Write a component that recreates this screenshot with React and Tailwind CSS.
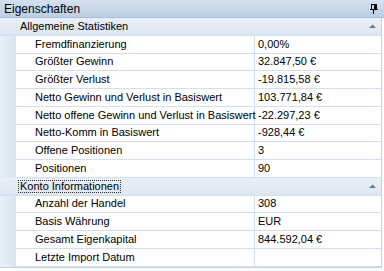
import { Fragment } from "react";

const sections = [
  {
    title: "Allgemeine Statistiken",
    rows: [
      ["Fremdfinanzierung", "0,00%"],
      ["Größter Gewinn", "32.847,50 €"],
      ["Größter Verlust", "-19.815,58 €"],
      ["Netto Gewinn und Verlust in Basiswert", "103.771,84 €"],
      ["Netto offene Gewinn und Verlust in Basiswert", "-22.297,23 €"],
      ["Netto-Komm in Basiswert", "-928,44 €"],
      ["Offene Positionen", "3"],
      ["Positionen", "90"],
    ],
  },
  {
    title: "Konto Informationen",
    focused: true,
    rows: [
      ["Anzahl der Handel", "308"],
      ["Basis Währung", "EUR"],
      ["Gesamt Eigenkapital", "844.592,04 €"],
      ["Letzte Import Datum", ""],
    ],
  },
];

function Pin() {
  return (
    <svg width="8" height="10" viewBox="0 0 8 10" className="block">
      <rect x="1.5" y="0.5" width="5" height="5" fill="none" stroke="#000" />
      <rect x="4" y="1" width="2" height="4" fill="#000" />
      <rect x="0" y="5" width="8" height="1" fill="#000" />
      <rect x="3" y="6" width="1" height="4" fill="#000" />
    </svg>
  );
}

function Caret() {
  return (
    <svg width="7" height="4" viewBox="0 0 7 4" className="block">
      <path d="M0 4 L3.5 0.5 L7 4 Z" fill="#6b7b8d" />
    </svg>
  );
}

export default function App() {
  return (
    <div
      className="w-[384px] h-[271px] bg-white overflow-hidden text-black text-[11px] leading-none"
      style={{ fontFamily: '"Liberation Sans", Arial, sans-serif' }}
    >
      <div className="h-[18px] flex items-center justify-between pl-[4px] pr-[6px] bg-gradient-to-b from-[#d3e0ef] to-[#bccfe5] border-b border-[#a7bcd6] text-[12px]">
        <span>Eigenschaften</span>
        <Pin />
      </div>
      <div className="mr-[2px] border-r border-b border-[#c5d3e3]">
        {sections.map((s) => (
          <Fragment key={s.title}>
            <div className="h-[17.75px] flex items-center bg-gradient-to-b from-[#eaf0f8] to-[#dde7f3] border-b border-[#d3dfec]">
              <div className="w-[16px] self-stretch" />
              <span
                className={
                  "ml-[3px] px-[1px] " +
                  (s.focused ? "outline-1 outline-dotted outline-[#333]" : "")
                }
              >
                {s.title}
              </span>
              <div className="ml-auto mr-[5px]">
                <Caret />
              </div>
            </div>
            {s.rows.map(([k, v]) => (
              <div key={k} className="h-[17.75px] flex">
                <div className="w-[16px] shrink-0 bg-gradient-to-r from-[#e8eff8] to-[#dbe5f2]" />
                <div className="w-[239px] shrink-0 flex items-center pl-[19px] border-b border-r border-[#d3dfec] whitespace-nowrap">
                  {k}
                </div>
                <div className="flex-1 flex items-center pl-[3px] border-b border-[#d3dfec] whitespace-nowrap">
                  {v}
                </div>
              </div>
            ))}
          </Fragment>
        ))}
      </div>
    </div>
  );
}
